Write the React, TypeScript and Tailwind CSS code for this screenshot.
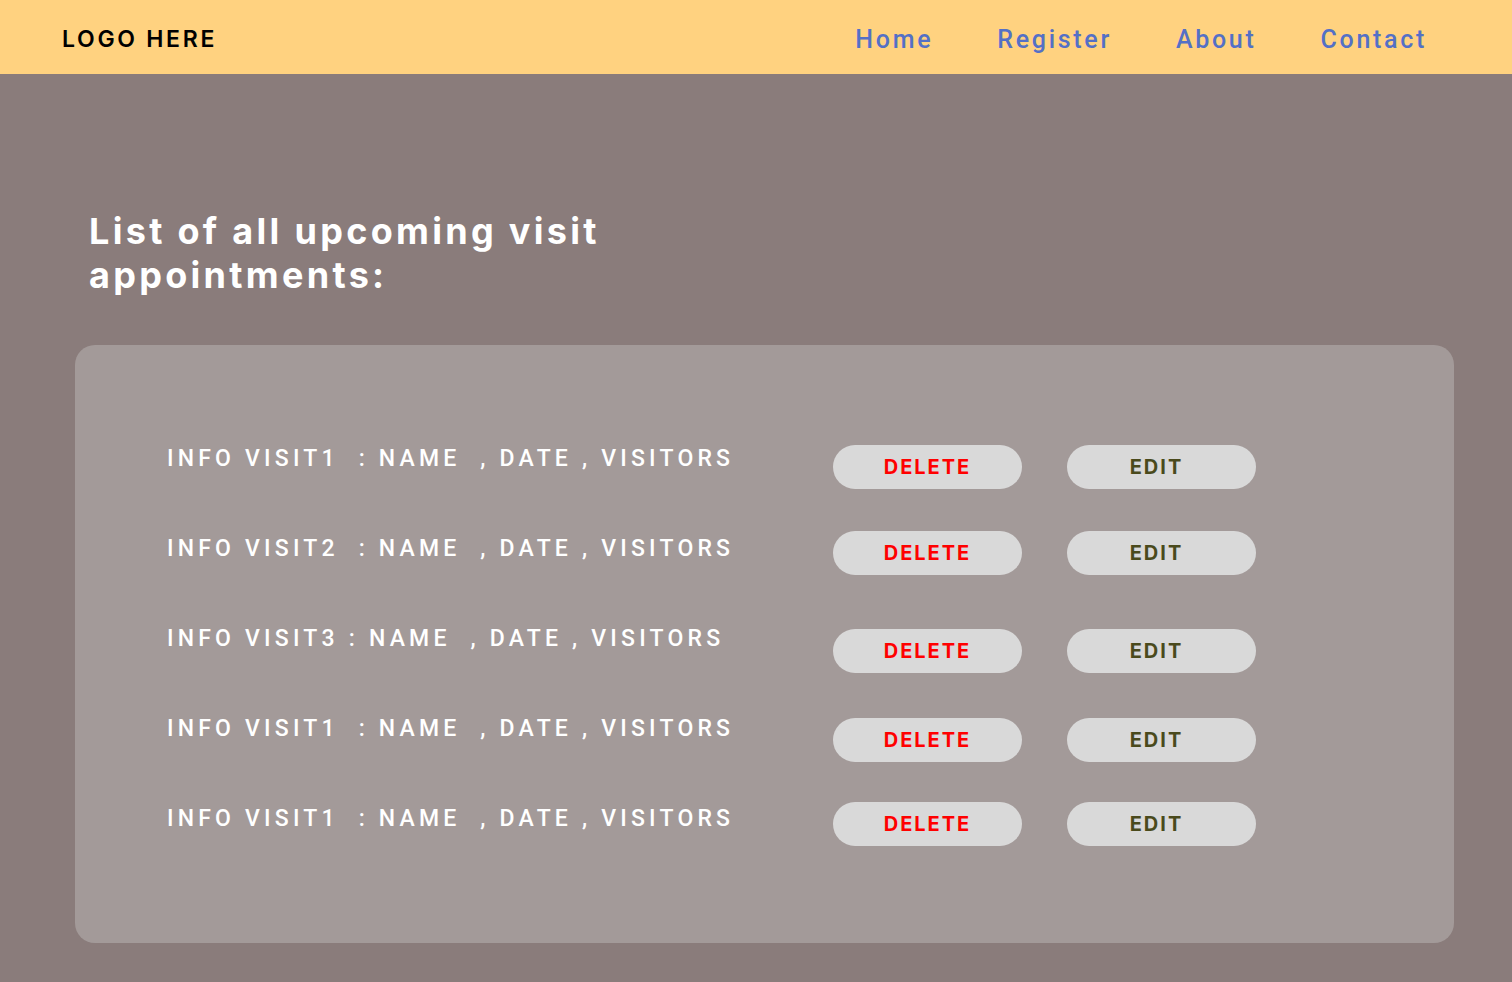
import React from "react";

const visits = [
  { text: "INFO VISIT1  : NAME  , DATE , VISITORS", shift: "mt-0" },
  { text: "INFO VISIT2  : NAME  , DATE , VISITORS", shift: "-mt-[4px]" },
  { text: "INFO VISIT3 : NAME  , DATE , VISITORS", shift: "mt-[4px]" },
  { text: "INFO VISIT1  : NAME  , DATE , VISITORS", shift: "mt-[3px]" },
  { text: "INFO VISIT1  : NAME  , DATE , VISITORS", shift: "-mt-[3px]" },
];

const navLinks = ["Home", "Register", "About", "Contact"];

export default function App() {
  return (
    <div className="min-h-screen bg-[#8a7c7b] flex flex-col">
      {/* Top bar */}
      <header className="h-[74px] bg-[#ffd280] flex items-center justify-between pt-[5px] pl-[62px] pr-[85px]">
        <div className="font-['Inter',sans-serif] font-semibold text-[23px] tracking-[2.7px] text-black">
          LOGO HERE
        </div>
        <nav className="flex items-center gap-[64px]">
          {navLinks.map((link) => (
            <a
              key={link}
              href="#"
              className="font-['Roboto',sans-serif] font-medium text-[25px] tracking-[2.7px] text-[#5470c6]"
            >
              {link}
            </a>
          ))}
        </nav>
      </header>

      <main className="flex flex-col pt-[135px] pl-[75px] pr-[58px] pb-[39px]">
        <h1 className="pl-[14px] font-['Inter',sans-serif] font-bold text-[36px] leading-[44px] tracking-[3.3px] text-white w-[580px]">
          List of all upcoming visit appointments:
        </h1>

        {/* Appointments card */}
        <section className="mt-[48px] h-[598px] rounded-[20px] bg-[#a39a99] pt-[100px] pl-[92px] flex flex-col gap-[46px]">
          {visits.map((visit, i) => (
            <div key={i} className="flex items-start h-[44px]">
              <span className="w-[666px] whitespace-pre font-['Roboto',sans-serif] font-medium text-[23px] leading-[28px] tracking-[4.2px] text-white">
                {visit.text}
              </span>
              <div className={`flex gap-[45px] -mt-[1px] ${visit.shift}`}>
                <button className="w-[189px] h-[44px] rounded-full bg-[#d9d9d9] font-['Inter',sans-serif] font-bold text-[20px] tracking-[2px] text-[#ff0000]">
                  DELETE
                </button>
                <button className="w-[189px] h-[44px] rounded-full bg-[#d9d9d9] pr-[10px] font-['Inter',sans-serif] font-bold text-[20px] tracking-[2px] text-[#4a4a1c]">
                  EDIT
                </button>
              </div>
            </div>
          ))}
        </section>
      </main>
    </div>
  );
}
